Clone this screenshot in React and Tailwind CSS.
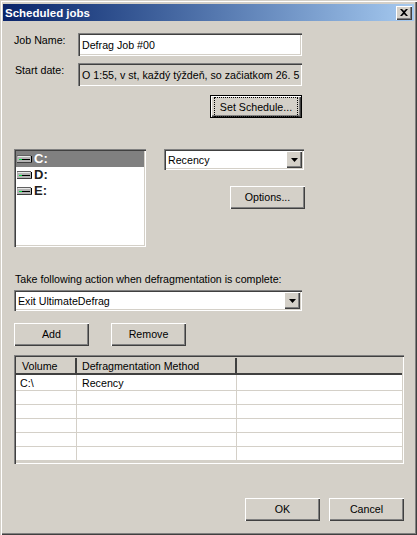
const sunken =
  "shadow-[inset_1px_1px_0_#808080,inset_2px_2px_0_#404040,inset_-1px_-1px_0_#ffffff,inset_-2px_-2px_0_#d4d0c8]";
const raised =
  "shadow-[inset_1px_1px_0_#ffffff,inset_-1px_-1px_0_#404040,inset_-2px_-2px_0_#808080]";

function Button({ label, className = "" }) {
  return (
    <div className={`flex h-[23px] w-[75px] items-center justify-center pb-[1px] ${raised} ${className}`}>
      {label}
    </div>
  );
}

function DriveIcon() {
  return (
    <svg width="15" height="8" viewBox="0 0 15 8" className="shrink-0">
      <rect x="0" y="0" width="14" height="7" fill="#b4b4b4" />
      <rect x="0" y="0" width="14" height="1" fill="#606060" />
      <rect x="1" y="1" width="12" height="1" fill="#e8e8e8" />
      <rect x="2" y="4" width="11" height="1" fill="#000000" />
      <rect x="2" y="4" width="3" height="1" fill="#00e040" />
      <rect x="14" y="1" width="1" height="7" fill="#000000" />
      <rect x="0" y="7" width="15" height="1" fill="#404040" />
    </svg>
  );
}

function Combo({ value, className = "" }) {
  return (
    <div className={`flex h-[21px] items-center bg-white pl-[4px] pr-[2px] ${sunken} ${className}`}>
      <span className="flex-1">{value}</span>
      <div className={`flex h-[17px] w-[16px] items-center justify-center bg-[#d4d0c8] ${raised}`}>
        <svg width="7" height="4" viewBox="0 0 7 4">
          <path d="M0 0h7L3.5 4z" fill="#000000" />
        </svg>
      </div>
    </div>
  );
}

function DriveRow({ name, selected }) {
  return (
    <div className={`flex h-[16px] items-center gap-[2px] pl-[1px] text-[13px] font-bold ${selected ? "bg-[#808080] text-white" : "text-[#202020]"}`}>
      <DriveIcon />
      <span>{name}</span>
    </div>
  );
}

const rows = [["C:\\", "Recency"], ["", ""], ["", ""], ["", ""], ["", ""], ["", ""]];

export default function App() {
  return (
    <div className="h-[535px] w-[417px] overflow-hidden whitespace-nowrap bg-[#d4d0c8] pl-[2px] pr-[3px] pt-[4px] font-['Liberation_Sans',sans-serif] text-[10.67px] leading-[14px] text-black shadow-[inset_1px_1px_0_#d4d0c8,inset_2px_2px_0_#ffffff,inset_-1px_-1px_0_#404040,inset_-2px_-2px_0_#808080]">
      {/* title bar */}
      <div className="ml-[1px] flex h-[17px] items-center justify-between bg-gradient-to-r from-[#0a246a] to-[#a6caf0] pl-[2px] pr-[2px]">
        <span className="text-[11.5px] font-bold text-white">Scheduled jobs</span>
        <div className={`flex h-[14px] w-[16px] items-center justify-center bg-[#d4d0c8] ${raised}`}>
          <svg width="8" height="7" viewBox="0 0 8 7">
            <path d="M0 0h2l2 2 2-2h2L5 3.5 8 7H6L4 5 2 7H0l3-3.5z" fill="#000000" />
          </svg>
        </div>
      </div>

      <div className="pl-[12px] pt-[12px]">
        {/* job name + date */}
        <div className="flex w-[288px] flex-col gap-[7px]">
          <div className="flex">
            <span className="w-[64px] shrink-0">Job Name:</span>
            <div className={`flex h-[23px] min-w-0 flex-1 items-center bg-white pl-[4px] ${sunken}`}>
              Defrag Job #00
            </div>
          </div>
          <div className="flex">
            <span className="w-[64px] shrink-0 pl-[1px]">Start date:</span>
            <div className={`flex h-[23px] min-w-0 flex-1 items-center overflow-hidden pl-[4px] ${sunken}`}>
              O 1:55, v st, každý týždeň, so začiatkom 26. 5
            </div>
          </div>
          <div className="mt-[2px] flex justify-end">
            <div className="border border-black">
              <div className={`flex h-[21px] w-[90px] items-center justify-center ${raised}`}>
                <span className="px-[3px] outline-1 outline-offset-[2px] outline-black outline-dotted">Set Schedule...</span>
              </div>
            </div>
          </div>
        </div>

        {/* drives + method */}
        <div className="mt-[31px] flex">
          <div className={`h-[98px] w-[132px] bg-white p-[2px] ${sunken}`}>
            <DriveRow name="C:" selected />
            <DriveRow name="D:" />
            <DriveRow name="E:" />
          </div>
          <div className="ml-[18px] flex w-[140px] flex-col">
            <Combo value="Recency" />
            <div className="mt-[16px] flex justify-end">
              <Button label="Options..." className="mr-[-1px]" />
            </div>
          </div>
        </div>

        {/* completion action */}
        <div className="mt-[25px] w-[288px]">
          <div className="pl-[1px]">Take following action when defragmentation is complete:</div>
          <Combo value="Exit UltimateDefrag" className="mt-[4px]" />
        </div>

        <div className="mt-[12px] flex gap-[22px]">
          <Button label="Add" />
          <Button label="Remove" />
        </div>

        {/* volume table */}
        <div className={`mt-[9px] h-[109px] w-[390px] p-[2px] ${sunken}`}>
          <div className="box-content flex h-[15px] border-b-2 border-b-[#404040] bg-[#d4d0c8] pt-[1px]">
            <div className="w-[61px] border-r-2 border-r-[#404040] pl-[6px] pt-[1px]">Volume</div>
            <div className="w-[160px] border-r-2 border-r-[#404040] pl-[5px] pt-[1px]">Defragmentation Method</div>
            <div className="flex-1" />
          </div>
          <div className="h-[86px] overflow-hidden bg-white">
            {rows.map((r, i) => (
              <div key={i} className={`flex border-b border-b-[#d4d0c8] ${i === 0 ? "h-[16px]" : "h-[14px]"}`}>
                <div className="w-[61px] border-r border-r-[#d4d0c8] pl-[4px] pt-[1px]">{r[0]}</div>
                <div className="w-[160px] border-r border-r-[#d4d0c8] pl-[5px] pt-[1px]">{r[1]}</div>
                <div className="flex-1" />
              </div>
            ))}
          </div>
        </div>

        {/* footer */}
        <div className="mt-[34px] flex w-[390px] justify-end gap-[9px]">
          <Button label="OK" />
          <Button label="Cancel" />
        </div>
      </div>
    </div>
  );
}
